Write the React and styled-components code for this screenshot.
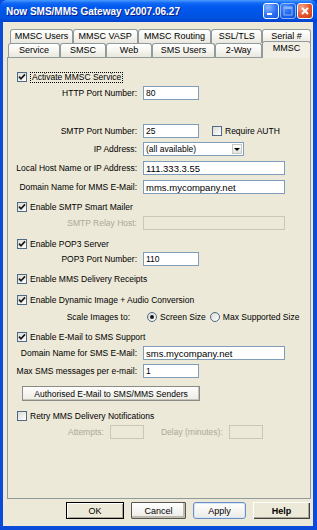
import React from 'react';
import styled, { createGlobalStyle, css } from 'styled-components';

const FONT = `"Liberation Sans", Arial, sans-serif`;

const GlobalStyle = createGlobalStyle`
  html, body {
    margin: 0;
    padding: 0;
  }
  body {
    background: #0B4BD9;
    font-family: ${FONT};
  }
`;

const Window = styled.div`
  width: 317px;
  height: 530px;
  display: flex;
  flex-direction: column;
  background: #0B4BD9;
  border-radius: 7px 7px 0 0;
  overflow: hidden;
  font-family: ${FONT};
  font-size: 8.5px;
  color: #000;
`;

const TitleBar = styled.div`
  height: 22px;
  flex: none;
  display: flex;
  align-items: center;
  padding: 0 4px 0 6px;
  background: linear-gradient(
    180deg,
    #4A9BFF 0%,
    #1169F5 14%,
    #0058EE 32%,
    #0055E6 62%,
    #0050DC 86%,
    #0040CC 100%
  );
`;

const Title = styled.div`
  flex: 1;
  color: #fff;
  font: bold 10px "Liberation Sans", Arial, sans-serif;
  text-shadow: 1px 1px 0 #0A1E8A;
  white-space: nowrap;
`;

const Controls = styled.div`
  display: flex;
  gap: 1px;
`;

const CtlButton = styled.div`
  width: 16px;
  height: 16px;
  box-sizing: border-box;
  border: 1px solid #fff;
  border-radius: 3px;
  display: flex;
  align-items: center;
  justify-content: center;
  background: ${p =>
    p.$close
      ? 'radial-gradient(circle at 30% 25%, #F7A58A, #E2552E 55%, #C53C15)'
      : 'radial-gradient(circle at 30% 25%, #8DB8FF, #2E72F2 55%, #1A56D8)'};
  opacity: ${p => (p.$disabled ? 0.55 : 1)};
`;

const Client = styled.div`
  flex: 1;
  margin: 0 4px 4px 3px;
  background: #ECE9D8;
  display: flex;
  flex-direction: column;
  padding: 7px 2px 0 4px;
`;

const TabRow = styled.div`
  display: flex;
  align-items: flex-end;
  height: 14px;
  margin-left: ${p => p.$indent}px;
`;

const Tab = styled.div`
  width: ${p => p.$w}px;
  height: 14px;
  box-sizing: border-box;
  border: 1px solid #919B9C;
  border-bottom: none;
  border-radius: 3px 3px 0 0;
  background: linear-gradient(180deg, #FFFFFF 0%, #F6F5F0 50%, #E9E7DD 100%);
  text-align: center;
  font-size: 9px;
  line-height: 13px;
  white-space: nowrap;
  overflow: hidden;

  ${p =>
    p.$active &&
    css`
      position: relative;
      z-index: 1;
      height: 17px;
      margin-bottom: -1px;
      background: #F1EFE4;
      line-height: 13px;
    `}
`;

const Panel = styled.div`
  height: 442px;
  box-sizing: border-box;
  border: 1px solid #919B9C;
  display: flex;
  flex-direction: column;
`;

const Row = styled.div`
  display: flex;
  align-items: center;
  height: 14px;
  flex: none;
  margin-top: ${p => p.$mt}px;
  padding-left: ${p => p.$indent ?? 9}px;
  gap: 3px;
  white-space: nowrap;
`;

const FieldRow = styled.div`
  display: grid;
  grid-template-columns: ${p => p.$label ?? 129}px auto;
  column-gap: ${p => p.$gap ?? 6}px;
  align-items: center;
  height: 14px;
  flex: none;
  margin-top: ${p => p.$mt}px;
`;

const Label = styled.span`
  text-align: right;
  white-space: nowrap;
  color: ${p => (p.$disabled ? '#ACA899' : '#000')};
`;

const Field = styled.div`
  display: flex;
  align-items: center;
  gap: 3px;
  white-space: nowrap;
`;

const TextBox = styled.input`
  width: ${p => p.$w}px;
  height: 14px;
  box-sizing: border-box;
  margin: 0;
  margin-left: ${p => p.$ml ?? 0}px;
  padding: 0 2px;
  border: 1px solid ${p => (p.disabled ? '#C9C7BA' : '#7F9DB9')};
  background: ${p => (p.disabled ? '#ECE9D8' : '#fff')};
  font-family: ${FONT};
  font-size: ${p => (p.$big ? '9.5px' : '8.5px')};
  color: #000;
  outline: none;
`;

const Select = styled.div`
  width: 101px;
  height: 14px;
  box-sizing: border-box;
  border: 1px solid #7F9DB9;
  background: #fff;
  display: flex;
  align-items: center;
  justify-content: space-between;
  padding: 0 1px 0 2px;
`;

const DropButton = styled.span`
  width: 10px;
  height: 10px;
  box-sizing: border-box;
  border: 1px solid #C8C8C0;
  background: linear-gradient(180deg, #FFFFFF, #E4E4DC);
  display: flex;
  align-items: center;
  justify-content: center;

  &::after {
    content: '';
    border-left: 3px solid transparent;
    border-right: 3px solid transparent;
    border-top: 3px solid #000;
    margin-top: 1px;
  }
`;

const Box = styled.span`
  width: 10px;
  height: 10px;
  flex: none;
  box-sizing: border-box;
  border: 1px solid #4E6A86;
  background: linear-gradient(135deg, #DCDBD5, #FFFFFF);
  display: inline-flex;
  align-items: center;
  justify-content: center;
  margin-left: ${p => p.$ml ?? 0}px;
`;

const RadioDot = styled.span`
  width: 10px;
  height: 10px;
  flex: none;
  box-sizing: border-box;
  border: 1px solid #4E6A86;
  border-radius: 50%;
  background: linear-gradient(135deg, #DCDBD5, #FFFFFF);
  display: inline-flex;
  align-items: center;
  justify-content: center;
  margin-left: ${p => p.$ml ?? 0}px;

  &::after {
    content: '';
    width: 4px;
    height: 4px;
    border-radius: 50%;
    background: ${p => (p.$on ? '#1A1A1A' : 'transparent')};
  }
`;

const FocusText = styled.span`
  border: 1px dotted #000;
  padding: 0 1px;
  line-height: 9px;
`;

const Muted = styled.span`
  color: #ACA899;
  margin-left: ${p => p.$ml ?? 0}px;
`;

const WideButton = styled.div`
  width: 178px;
  height: 15px;
  box-sizing: border-box;
  margin: 8px 0 0 14px;
  border: 1px solid #8B8B86;
  background: linear-gradient(180deg, #FEFEFD, #ECEBE4);
  box-shadow: inset -1px -1px 0 #C6C4B8;
  display: flex;
  align-items: center;
  justify-content: center;
  flex: none;
  white-space: nowrap;
`;

const ButtonBar = styled.div`
  display: flex;
  justify-content: flex-end;
  gap: 7px;
  margin-top: 3px;
  padding-right: 1px;
`;

const variants = {
  ok: css`
    border: 1px solid #000;
    background: #ECE9D8;
    box-shadow: inset 1px 1px 0 #fff, inset -1px -1px 0 #ACA899;
  `,
  cancel: css`
    border: 1px solid #555;
    border-radius: 1px;
    background: linear-gradient(180deg, #FFFFFF, #ECEBE6);
    box-shadow: inset -2px -2px 0 #BDBBAE;
  `,
  apply: css`
    border: 1px solid #6D8FC4;
    border-radius: 3px;
    background: linear-gradient(180deg, #FFFFFF, #ECEBE6);
    box-shadow: inset 0 0 0 1px #D5E6FB;
  `,
  help: css`
    border: none;
    background: #ECE9D8;
    font-weight: bold;
    box-shadow: inset 1px 1px 0 #fff, inset -1px -1px 0 #404040,
      inset -2px -2px 0 #ACA899;
  `,
};

const Button = styled.div`
  width: ${p => p.$w}px;
  height: 17px;
  box-sizing: border-box;
  display: flex;
  align-items: center;
  justify-content: center;
  font-size: 9px;
  ${p => variants[p.$kind]}
`;

function Check({ checked, ml }) {
  return (
    <Box $ml={ml}>
      {checked && (
        <svg width="8" height="8" viewBox="0 0 8 8">
          <path d="M1 3.6 L3 5.8 L7 1.4" fill="none" stroke="#1A1A1A" strokeWidth="1.7" />
        </svg>
      )}
    </Box>
  );
}

const rowTabs = [
  ['MMSC Users', 63],
  ['MMSC VASP', 65],
  ['MMSC Routing', 74],
  ['SSL/TLS', 51],
  ['Serial #', 49],
];

const frontTabs = [
  ['Service', 52],
  ['SMSC', 46],
  ['Web', 46],
  ['SMS Users', 63],
  ['2-Way', 47],
  ['MMSC', 49],
];

export default function App() {
  return (
    <>
      <GlobalStyle />
      <Window>
        <TitleBar>
          <Title>Now SMS/MMS Gateway v2007.06.27</Title>
          <Controls>
            <CtlButton>
              <svg width="10" height="10" viewBox="0 0 10 10">
                <rect x="1" y="7" width="5" height="2" fill="#fff" />
              </svg>
            </CtlButton>
            <CtlButton $disabled>
              <svg width="10" height="10" viewBox="0 0 10 10">
                <rect x="1" y="1" width="8" height="8" fill="none" stroke="#fff" strokeWidth="1" />
                <rect x="1" y="1" width="8" height="2" fill="#fff" />
              </svg>
            </CtlButton>
            <CtlButton $close>
              <svg width="10" height="10" viewBox="0 0 10 10">
                <path d="M2 2 L8 8 M8 2 L2 8" stroke="#fff" strokeWidth="1.8" />
              </svg>
            </CtlButton>
          </Controls>
        </TitleBar>

        <Client>
          <TabRow $indent={3}>
            {rowTabs.map(([name, w]) => (
              <Tab key={name} $w={w}>{name}</Tab>
            ))}
          </TabRow>
          <TabRow $indent={1}>
            {frontTabs.map(([name, w]) => (
              <Tab key={name} $w={w} $active={name === 'MMSC'}>{name}</Tab>
            ))}
          </TabRow>

          <Panel>
            <Row $mt={12}>
              <Check checked />
              <FocusText>Activate MMSC Service</FocusText>
            </Row>
            <FieldRow $mt={2}>
              <Label>HTTP Port Number:</Label>
              <Field><TextBox $w={56} defaultValue="80" /></Field>
            </FieldRow>
            <FieldRow $mt={24}>
              <Label>SMTP Port Number:</Label>
              <Field>
                <TextBox $w={56} defaultValue="25" />
                <Check ml={10} />
                <span>Require AUTH</span>
              </Field>
            </FieldRow>
            <FieldRow $mt={4}>
              <Label>IP Address:</Label>
              <Field>
                <Select>
                  <span>(all available)</span>
                  <DropButton />
                </Select>
              </Field>
            </FieldRow>
            <FieldRow $mt={5}>
              <Label>Local Host Name or IP Address:</Label>
              <Field><TextBox $w={142} $big defaultValue="111.333.3.55" /></Field>
            </FieldRow>
            <FieldRow $mt={5}>
              <Label>Domain Name for MMS E-Mail:</Label>
              <Field><TextBox $w={142} $big defaultValue="mms.mycompany.net" /></Field>
            </FieldRow>
            <Row $mt={6}>
              <Check checked />
              <span>Enable SMTP Smart Mailer</span>
            </Row>
            <FieldRow $mt={2}>
              <Label $disabled>SMTP Relay Host:</Label>
              <Field><TextBox $w={142} disabled /></Field>
            </FieldRow>
            <Row $mt={7}>
              <Check checked />
              <span>Enable POP3 Server</span>
            </Row>
            <FieldRow $mt={1}>
              <Label>POP3 Port Number:</Label>
              <Field><TextBox $w={56} defaultValue="110" /></Field>
            </FieldRow>
            <Row $mt={6}>
              <Check checked />
              <span>Enable MMS Delivery Receipts</span>
            </Row>
            <Row $mt={7}>
              <Check checked />
              <span>Enable Dynamic Image + Audio Conversion</span>
            </Row>
            <FieldRow $mt={3} $label={122} $gap={17}>
              <Label>Scale Images to:</Label>
              <Field>
                <RadioDot $on />
                <span>Screen Size</span>
                <RadioDot $ml={1} />
                <span>Max Supported Size</span>
              </Field>
            </FieldRow>
            <Row $mt={6}>
              <Check checked />
              <span>Enable E-Mail to SMS Support</span>
            </Row>
            <FieldRow $mt={2}>
              <Label>Domain Name for SMS E-Mail:</Label>
              <Field><TextBox $w={142} $big defaultValue="sms.mycompany.net" /></Field>
            </FieldRow>
            <FieldRow $mt={4}>
              <Label>Max SMS messages per e-mail:</Label>
              <Field><TextBox $w={56} defaultValue="1" /></Field>
            </FieldRow>
            <WideButton>Authorised E-Mail to SMS/MMS Senders</WideButton>
            <Row $mt={8}>
              <Check />
              <span>Retry MMS Delivery Notifications</span>
            </Row>
            <Row $mt={2} $indent={60}>
              <Muted>Attempts:</Muted>
              <TextBox $w={34} $ml={3} disabled />
              <Muted $ml={14}>Delay (minutes):</Muted>
              <TextBox $w={34} $ml={3} disabled />
            </Row>
          </Panel>

          <ButtonBar>
            <Button $w={58} $kind="ok">OK</Button>
            <Button $w={55} $kind="cancel">Cancel</Button>
            <Button $w={53} $kind="apply">Apply</Button>
            <Button $w={57} $kind="help">Help</Button>
          </ButtonBar>
        </Client>
      </Window>
    </>
  );
}
